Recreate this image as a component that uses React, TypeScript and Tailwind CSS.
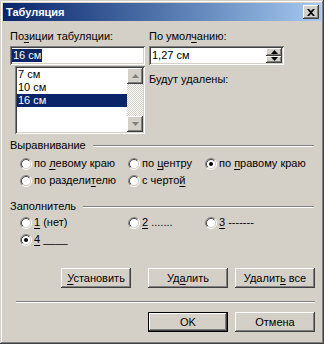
import type { ReactNode } from "react";

const raised =
  "shadow-[inset_-1px_-1px_#404040,inset_1px_1px_#ffffff,inset_-2px_-2px_#808080,inset_2px_2px_#d4d0c8]";
const sunken =
  "shadow-[inset_1px_1px_#808080,inset_-1px_-1px_#ffffff,inset_2px_2px_#404040,inset_-2px_-2px_#d4d0c8]";

function U({ children }: { children: ReactNode }) {
  return <span className="underline underline-offset-[2px]">{children}</span>;
}

function Radio({ checked, children }: { checked?: boolean; children: ReactNode }) {
  return (
    <div className="flex h-[17px] items-center gap-[2px] whitespace-nowrap">
      <svg width="12" height="12" viewBox="0 0 12 12" className="shrink-0">
        <path d="M6 0.5a5.5 5.5 0 0 0-3.9 9.4" fill="none" stroke="#808080" />
        <path d="M2.1 9.9A5.5 5.5 0 0 0 9.9 2.1" fill="none" stroke="#ffffff" />
        <path d="M9.9 2.1A5.5 5.5 0 0 0 6 0.5" fill="none" stroke="#808080" />
        <circle cx="6" cy="6" r="4.5" fill="#ffffff" />
        <path d="M6 1.5a4.5 4.5 0 0 0-3.2 7.7" fill="none" stroke="#404040" />
        <path d="M9.2 2.8A4.5 4.5 0 0 0 6 1.5" fill="none" stroke="#404040" />
        <path d="M2.8 9.2A4.5 4.5 0 0 0 9.2 2.8" fill="none" stroke="#d4d0c8" />
        <circle cx="6" cy="6" r="3.6" fill="#ffffff" />
        {checked && <circle cx="6" cy="6" r="2" fill="#000000" />}
      </svg>
      <span>{children}</span>
    </div>
  );
}

function GroupTitle({ children }: { children: ReactNode }) {
  return (
    <div className="flex h-[13px] items-center">
      <span>{children}</span>
      <div className="ml-[7px] h-[2px] flex-1 border-t border-b border-t-[#808080] border-b-white" />
    </div>
  );
}

function Arrow({ up, color = "#000" }: { up?: boolean; color?: string }) {
  return (
    <svg width="7" height="4" viewBox="0 0 7 4">
      <path d={up ? "M3.5 0L7 4H0z" : "M0 0h7L3.5 4z"} fill={color} />
    </svg>
  );
}

function Btn({ w, def, children }: { w: string; def?: boolean; children: ReactNode }) {
  return (
    <div
      className={`flex h-[20px] items-center justify-center bg-[#d4d0c8] ${w} ${
        def
          ? "shadow-[inset_0_0_0_1px_#000000,inset_-2px_-2px_#404040,inset_2px_2px_#ffffff,inset_-3px_-3px_#808080,inset_3px_3px_#d4d0c8]"
          : raised
      }`}
    >
      {children}
    </div>
  );
}

export default function App() {
  return (
    <div
      className="h-[344px] w-[324px] bg-[#d4d0c8] p-[3px] text-[11px] leading-[13px] text-black shadow-[inset_-1px_-1px_#404040,inset_1px_1px_#d4d0c8,inset_-2px_-2px_#808080,inset_2px_2px_#ffffff]"
      style={{ fontFamily: '"Liberation Sans", Arial, sans-serif' }}
    >
      {/* title bar */}
      <div className="flex h-[18px] items-center justify-between bg-gradient-to-r from-[#0a246a] to-[#a6caf0] pl-[3px] pr-[2px]">
        <span className="font-bold text-white">Табуляция</span>
        <div className={`flex h-[14px] w-[16px] items-center justify-center bg-[#d4d0c8] ${raised}`}>
          <svg width="8" height="7" viewBox="0 0 8 7">
            <path d="M0 0h2l2 2 2-2h2L5 3.5 8 7H6L4 5 2 7H0l3-3.5z" fill="#000" />
          </svg>
        </div>
      </div>

      <div className="px-[7px] pt-[9px]">
        {/* top */}
        <div className="flex gap-[4px]">
          <div className="w-[135px]">
            <div>
              По<U>з</U>иции табуляции:
            </div>
            <div className={`mt-[3px] flex h-[19px] items-center bg-white pl-[2px] ${sunken}`}>
              <span className="bg-[#0a246a] px-[1px] text-white">16 см</span>
            </div>
            <div className={`ml-[5px] mt-[1px] flex h-[68px] bg-white p-[2px] ${sunken}`}>
              <div className="flex-1">
                <div className="h-[13px] pl-[1px]">7 см</div>
                <div className="h-[13px] pl-[1px]">10 см</div>
                <div className="h-[13px] bg-[#0a246a] pl-[1px] text-white">16 см</div>
              </div>
              <div className="flex w-[16px] flex-col">
                <div className={`flex h-[16px] items-center justify-center bg-[#d4d0c8] ${raised}`}>
                  <Arrow up color="#808080" />
                </div>
                <div className="flex-1 bg-[repeating-conic-gradient(#d4d0c8_0_25%,#ffffff_0_50%)] bg-[length:2px_2px]" />
                <div className={`flex h-[16px] items-center justify-center bg-[#d4d0c8] ${raised}`}>
                  <Arrow color="#808080" />
                </div>
              </div>
            </div>
          </div>

          <div className="w-[135px]">
            <div>
              По умол<U>ч</U>анию:
            </div>
            <div className={`mt-[3px] flex h-[19px] items-center bg-white p-[2px] ${sunken}`}>
              <span className="flex-1 pl-[1px]">1,27 см</span>
              <div className="flex h-full w-[16px] flex-col">
                <div className={`flex flex-1 items-center justify-center bg-[#d4d0c8] ${raised}`}>
                  <Arrow up />
                </div>
                <div className={`flex flex-1 items-center justify-center bg-[#d4d0c8] ${raised}`}>
                  <Arrow />
                </div>
              </div>
            </div>
            <div className="mt-[8px]">Будут удалены:</div>
          </div>
        </div>

        {/* alignment */}
        <div className="mt-[5px]">
          <GroupTitle>Выравнивание</GroupTitle>
          <div className="mt-[3px] grid grid-cols-[108px_77px_1fr] pl-[10px]">
            <Radio>
              по <U>л</U>евому краю
            </Radio>
            <Radio>
              по <U>ц</U>ентру
            </Radio>
            <Radio checked>
              по <U>п</U>равому краю
            </Radio>
            <Radio>
              по раздели<U>т</U>елю
            </Radio>
            <Radio>
              с черто<U>й</U>
            </Radio>
          </div>
        </div>

        {/* leader */}
        <div className="mt-[11px]">
          <GroupTitle>Заполнитель</GroupTitle>
          <div className="mt-[1px] grid grid-cols-[108px_77px_1fr] pl-[10px]">
            <Radio>
              <U>1</U> (нет)
            </Radio>
            <Radio>
              <U>2</U> .......
            </Radio>
            <Radio>
              <U>3</U> -------
            </Radio>
            <Radio checked>
              <U>4</U> ____
            </Radio>
          </div>
        </div>

        {/* buttons */}
        <div className="mr-[-1px] mt-[20px] flex justify-end gap-[7px]">
          <Btn w="w-[70px] mr-[10px]">
            <span>
              <U>У</U>становить
            </span>
          </Btn>
          <Btn w="w-[80px]">
            <span>
              Уд<U>а</U>лить
            </span>
          </Btn>
          <Btn w="w-[80px]">
            <span>
              Удалит<U>ь</U> все
            </span>
          </Btn>
        </div>

        <div className="ml-[6px] mr-[-1px] mt-[13px] h-[2px] border-t border-b border-t-[#808080] border-b-white" />

        <div className="mr-[-1px] mt-[9px] flex justify-end gap-[7px]">
          <Btn w="w-[80px]" def>
            OK
          </Btn>
          <Btn w="w-[80px]">Отмена</Btn>
        </div>
      </div>
    </div>
  );
}
